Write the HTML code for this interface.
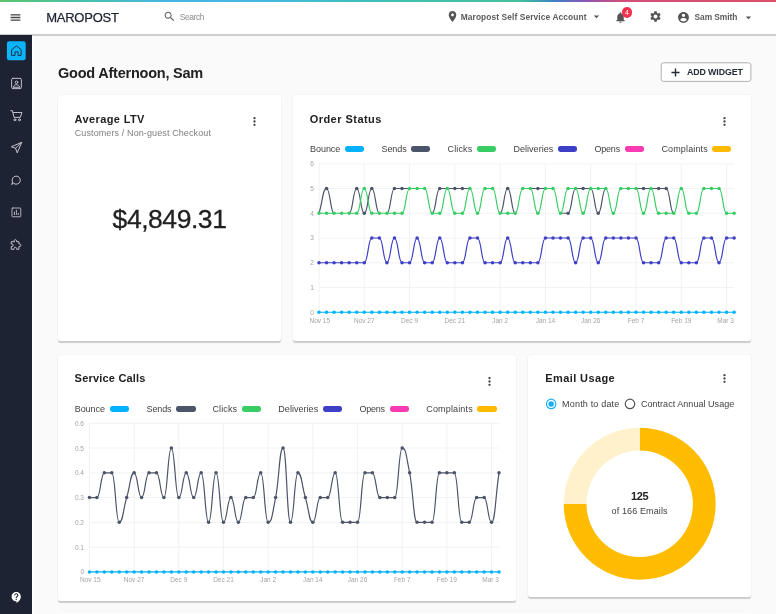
<!DOCTYPE html>
<html lang="en">
<head>
<meta charset="utf-8">
<title>Maropost Dashboard</title>
<style>
*{box-sizing:border-box;margin:0;padding:0}
html,body{width:776px;height:614px;overflow:hidden;background:#fafafa;font-family:"Liberation Sans",sans-serif;color:#212121}
.abs,.t,.lg,.sw,.card,svg.ic{position:absolute}
.t,.lg{white-space:nowrap;line-height:1}
#grad{position:absolute;left:0;top:0;width:776px;height:2.3px;background:linear-gradient(90deg,#5ac46e 0%,#46c0b8 13%,#45b5e5 22%,#45b8e2 34%,#40c0b2 50%,#45bf9c 67%,#3fa5b0 69%,#3f80c5 71.5%,#8a55b5 75.5%,#d0507a 80%,#dc5068 100%)}
#hdr{position:absolute;left:0;top:2px;width:776px;height:32px;background:#fff}
#hband{position:absolute;left:0;top:34px;width:776px;height:2px;background:#cdcdcd;box-shadow:0 0 .7px rgba(0,0,0,.18)}
#sgap{position:absolute;left:32px;top:36px;width:2px;height:578px;background:#fff}
#side{position:absolute;left:0;top:35px;width:32px;height:579px;background:#1e2333}
.card{background:#fff;border-radius:2.5px;box-shadow:0 1.1px 1px rgba(0,0,0,.18),0 0 1.5px rgba(0,0,0,.09)}
.h1{font-weight:700;font-size:14.5px;color:#212121}
.ct{font-weight:700;font-size:11px;color:#212121}
.sub{font-size:9px;color:#808080}
.lg{font-size:9px;color:#424242}
.sw{width:19.3px;height:6.5px;border-radius:2.4px}
.hd{font-weight:700;font-size:8.4px;color:#5c5c5c}
svg.ic{overflow:visible}
.ax text{font-family:"Liberation Sans",sans-serif;font-size:6.5px;fill:#a3a3a3}
#charts{position:absolute;left:0;top:0}
#root{position:absolute;left:0;top:0;width:776px;height:614px;overflow:hidden;will-change:transform}
#logo{letter-spacing:-0.24px;left:46.2px!important;width:auto!important;text-align:left!important}
#srch{letter-spacing:-0.46px;left:179.8px!important;width:auto!important;text-align:left!important}
#acct{letter-spacing:0.10px;left:460.7px!important;width:auto!important;text-align:left!important}
#user{letter-spacing:-0.07px;left:694.6px!important;width:auto!important;text-align:left!important}
#greet{letter-spacing:-0.23px;left:58.0px!important;width:auto!important;text-align:left!important}
#addw{letter-spacing:-0.08px;left:686.9px!important;width:auto!important;text-align:left!important}
#t1{letter-spacing:0.38px;left:74.6px!important;width:auto!important;text-align:left!important}
#s1{letter-spacing:0.11px;left:74.7px!important;width:auto!important;text-align:left!important}
#big{letter-spacing:-0.45px;left:112.6px!important;width:auto!important;text-align:left!important}
#t2{letter-spacing:0.46px;left:309.7px!important;width:auto!important;text-align:left!important}
#t3{letter-spacing:0.20px;left:74.6px!important;width:auto!important;text-align:left!important}
#t4{letter-spacing:0.40px;left:545.3px!important;width:auto!important;text-align:left!important}
#r1{letter-spacing:0.18px;left:562.1px!important;width:auto!important;text-align:left!important}
#r2{letter-spacing:0.04px;left:640.9px!important;width:auto!important;text-align:left!important}
#la0{letter-spacing:-0.06px;left:310.1px!important;width:auto!important;text-align:left!important}
#la1{letter-spacing:-0.12px;left:381.6px!important;width:auto!important;text-align:left!important}
#la2{letter-spacing:0.11px;left:447.6px!important;width:auto!important;text-align:left!important}
#la3{letter-spacing:0.04px;left:513.4px!important;width:auto!important;text-align:left!important}
#la4{letter-spacing:-0.22px;left:594.5px!important;width:auto!important;text-align:left!important}
#la5{letter-spacing:0.15px;left:661.4px!important;width:auto!important;text-align:left!important}
#lb0{letter-spacing:-0.04px;left:74.7px!important;width:auto!important;text-align:left!important}
#lb1{letter-spacing:-0.10px;left:146.5px!important;width:auto!important;text-align:left!important}
#lb2{letter-spacing:0.11px;left:212.5px!important;width:auto!important;text-align:left!important}
#lb3{letter-spacing:0.04px;left:278.3px!important;width:auto!important;text-align:left!important}
#lb4{letter-spacing:-0.22px;left:359.4px!important;width:auto!important;text-align:left!important}
#lb5{letter-spacing:0.15px;left:426.3px!important;width:auto!important;text-align:left!important}
#d1{letter-spacing:-0.40px;left:631.0px!important;width:auto!important;text-align:left!important}
#d2{letter-spacing:0.13px;left:611.5px!important;width:auto!important;text-align:left!important}

</style>
</head>
<body>
<div id="root">
<div id="hdr"></div>
<div id="hband"></div>
<div id="sgap"></div>
<div id="grad"></div>
<div id="side"></div>

<!-- header -->
<svg class="ic" style="left:8.5px;top:10.9px" width="13" height="13" viewBox="0 0 24 24"><path fill="#444" d="M3 18.200h18v-2.400H3v2.400zm0-5h18v-2.400H3v2.400zm0-7.400v2.400h18V5.800H3z"/></svg>
<span class="t" id="logo" style="left:46.2px;top:11.2px;font-size:13px;color:#1e2333;-webkit-text-stroke:.25px #1e2333">MAROPOST</span>
<svg class="ic" style="left:162.6px;top:10.4px" width="13" height="13" viewBox="0 0 24 24"><path fill="#616161" d="M15.5 14h-.79l-.28-.27C15.41 12.59 16 11.11 16 9.5 16 5.910 13.090 3 9.5 3S3 5.910 3 9.5 5.910 16 9.5 16c1.610 0 3.090-.59 4.230-1.570l.27.28v.79l5 4.990L20.490 19l-4.990-5zm-6 0C7.010 14 5 11.990 5 9.5S7.010 5 9.5 5 14 7.010 14 9.5 11.990 14 9.500 14z"/></svg>
<span class="t" id="srch" style="left:180px;top:13.1px;font-size:8.5px;color:#8e8e8e">Search</span>

<svg class="ic" style="left:445.6px;top:10px" width="13" height="13" viewBox="0 0 24 24"><path fill="#555" d="M12 2C8.130 2 5 5.130 5 9c0 5.250 7 13 7 13s7-7.750 7-13c0-3.870-3.130-7-7-7zm0 9.500c-1.380 0-2.500-1.120-2.500-2.500s1.120-2.500 2.500-2.500 2.500 1.120 2.500 2.500-1.120 2.500-2.500 2.500z"/></svg>
<span class="t hd" id="acct" style="left:460.6px;top:12.9px">Maropost Self Service Account</span>
<svg class="ic" style="left:590.4px;top:10.3px" width="13" height="13" viewBox="0 0 24 24"><path fill="#555" d="M7 10l5 5 5-5z"/></svg>
<svg class="ic" style="left:613.8px;top:10.6px" width="13" height="13" viewBox="0 0 24 24"><path fill="#555" d="M12 22c1.100 0 2-.9 2-2h-4c0 1.100.89 2 2 2zm6-6v-5c0-3.070-1.640-5.640-4.500-6.320V4c0-.83-.67-1.500-1.500-1.500s-1.500.67-1.500 1.500v.68C7.630 5.360 6 7.920 6 11v5l-2 2v1h16v-1l-2-2z"/></svg>
<span class="abs" style="left:621.6px;top:7.1px;width:10.9px;height:10.9px;border-radius:50%;background:#f5304e"></span>
<span class="t" style="left:621.6px;top:9.1px;width:10.8px;text-align:center;font-size:7px;color:#fff">4</span>
<svg class="ic" style="left:648.5px;top:10.2px" width="13" height="13" viewBox="0 0 24 24"><path fill="#555" d="M19.140 12.940c.04-.3.06-.61.06-.94 0-.32-.02-.64-.07-.94l2.030-1.580c.18-.14.23-.41.12-.61l-1.920-3.320c-.12-.22-.37-.29-.59-.22l-2.390.96c-.5-.38-1.030-.7-1.620-.94l-.36-2.540c-.04-.24-.24-.41-.48-.41h-3.840c-.24 0-.43.17-.47.41l-.36 2.540c-.59.24-1.130.57-1.620.94l-2.390-.96c-.22-.08-.47 0-.59.22L2.740 8.870c-.12.21-.08.47.12.61l2.030 1.580c-.05.3-.09.63-.09.94s.02.64.07.94l-2.030 1.580c-.18.14-.23.41-.12.61l1.920 3.320c.12.22.37.29.59.22l2.390-.96c.5.38 1.030.7 1.620.94l.36 2.540c.05.24.24.41.48.41h3.840c.24 0 .44-.17.47-.41l.36-2.540c.59-.24 1.130-.56 1.620-.94l2.390.96c.22.08.47 0 .59-.22l1.920-3.320c.12-.22.07-.47-.12-.61l-2.010-1.580zM12 15.600c-1.980 0-3.600-1.620-3.600-3.600s1.620-3.600 3.600-3.600 3.600 1.620 3.600 3.600-1.620 3.600-3.600 3.600z"/></svg>
<svg class="ic" style="left:677.4px;top:10.8px" width="13" height="13" viewBox="0 0 24 24"><path fill="#555" d="M12 2C6.480 2 2 6.480 2 12s4.480 10 10 10 10-4.480 10-10S17.520 2 12 2zm0 3c1.660 0 3 1.340 3 3s-1.340 3-3 3-3-1.340-3-3 1.340-3 3-3zm0 14.200c-2.500 0-4.710-1.280-6-3.220.03-1.990 4-3.080 6-3.080 1.990 0 5.970 1.090 6 3.080-1.290 1.940-3.500 3.220-6 3.220z"/></svg>
<span class="t hd" id="user" style="left:694.7px;top:12.9px">Sam Smith</span>
<svg class="ic" style="left:742.1px;top:10.8px" width="13" height="13" viewBox="0 0 24 24"><path fill="#555" d="M7 10l5 5 5-5z"/></svg>

<!-- sidebar icons -->
<svg class="ic" style="left:0;top:0" width="34" height="70" viewBox="0 0 34 70"><rect x="6.900" y="41.200" width="18.800" height="19" rx="2.300" fill="#0cb4fc"/></svg>
<svg class="ic" style="left:9.7px;top:44.2px" width="13" height="13" viewBox="0 0 24 24" fill="none" stroke="#1e2333" stroke-width="1.700" stroke-linejoin="round" stroke-linecap="round"><path d="M3.500 10.300L12 3.300l8.500 7V21h-5.700v-6.500H9.200V21H3.500z"/></svg>
<svg class="ic" style="left:9.800px;top:76.600px" width="13" height="13" viewBox="0 0 24 24" fill="none" stroke="#c9ccd3" stroke-width="1.750" stroke-linejoin="round" stroke-linecap="round"><rect x="3" y="2.500" width="18" height="19" rx="2.500"/><circle cx="12" cy="9.800" r="2.400"/><path d="M6 18.300c.9-2.800 3.200-3.900 6-3.900s5.100 1.100 6 3.900z"/></svg>
<svg class="ic" style="left:9.500px;top:108.700px" width="13" height="13" viewBox="0 0 24 24" fill="none" stroke="#c9ccd3" stroke-width="1.750" stroke-linejoin="round" stroke-linecap="round"><path d="M1.500 3h3l3 12.500h11.500l3-9H6"/><circle cx="9" cy="20" r="1.800"/><circle cx="17.500" cy="20" r="1.800"/></svg>
<svg class="ic" style="left:10px;top:140.800px" width="13" height="13" viewBox="0 0 24 24" fill="none" stroke="#c9ccd3" stroke-width="1.750" stroke-linejoin="round" stroke-linecap="round"><g transform="translate(11.70 12.00) scale(0.93) translate(-12 -12)" stroke-width="1.88"><path d="M22 2L2 10.500l8.500 3L13.500 22z M10.500 13.500L22 2"/></g></svg>
<svg class="ic" style="left:9.600px;top:173.800px" width="13" height="13" viewBox="0 0 24 24" fill="none" stroke="#c9ccd3" stroke-width="1.750" stroke-linejoin="round" stroke-linecap="round"><g transform="translate(11.40 11.00) scale(0.88) translate(-12 -12)" stroke-width="1.99"><path d="M6.200 18.800A8.600 8.600 0 1 0 4.300 16.200L3 21z"/></g></svg>
<svg class="ic" style="left:9.600px;top:205.600px" width="13" height="13" viewBox="0 0 24 24" fill="none" stroke="#c9ccd3" stroke-width="1.750" stroke-linejoin="round" stroke-linecap="round"><g transform="translate(11.80 11.80) scale(0.90) translate(-12 -12)" stroke-width="1.70"><rect x="3" y="3" width="18" height="18" rx="1.500"/><path d="M8 16.500v-5M12 16.500v-9M16 16.500v-2.500"/></g></svg>
<svg class="ic" style="left:9.500px;top:238px" width="13" height="13" viewBox="0 0 24 24" fill="none" stroke="#c9ccd3" stroke-width="1.750" stroke-linejoin="round" stroke-linecap="round"><g transform="translate(10.30 12.40) scale(0.94) translate(-12 -12)" stroke-width="1.85"><path d="M9 4.500c0-1.400 1.100-2.500 2.500-2.500S14 3.100 14 4.500V6h4.500v4.500H20c1.400 0 2.500 1.100 2.500 2.500s-1.100 2.500-2.500 2.500h-1.500V21H14v-1.500c0-1.400-1.100-2.500-2.500-2.500S9 18.100 9 19.500V21H3.500v-5.500H5c1.400 0 2.500-1.100 2.500-2.500S6.400 10.500 5 10.500H3.500V6H9z"/></g></svg>
<svg class="ic" style="left:9.500px;top:591.300px" width="13" height="13" viewBox="0 0 24 24"><path fill="#fff" d="M11.500 2C6.810 2 3 5.810 3 10.500S6.810 19 11.500 19h.5v3c4.860-2.340 8-7 8-11.500C20 5.810 16.190 2 11.500 2zm1 14.500h-2v-2h2v2zm0-3.500h-2c0-3.250 3-3 3-5 0-1.100-.9-2-2-2s-2 .9-2 2h-2c0-2.210 1.790-4 4-4s4 1.790 4 4c0 2.500-3 2.750-3 5z"/></svg>

<!-- title row -->
<span class="t h1" id="greet" style="left:57.8px;top:65.5px">Good Afternoon, Sam</span>
<svg class="ic" style="left:0;top:0" width="776" height="100" viewBox="0 0 776 100"><rect x="661.200" y="62.800" width="89.700" height="18.600" rx="2.300" fill="#fff" stroke="#b0b0b0" stroke-width="1"/></svg>
<svg class="ic" style="left:669.2px;top:65.700px" width="13" height="13" viewBox="0 0 24 24"><path fill="#262b3a" d="M19.500 13.300h-6.200v6.200h-2.600v-6.200H4.500v-2.600h6.200V4.500h2.600v6.200h6.200v2.600z"/></svg>
<span class="t" id="addw" style="left:687px;top:67.900px;font-size:8.800px;font-weight:700;color:#262b3a">ADD WIDGET</span>

<!-- cards -->
<div class="card" style="left:58px;top:95px;width:223.200px;height:246.300px"></div>
<div class="card" style="left:292.700px;top:95px;width:458.400px;height:246.300px"></div>
<div class="card" style="left:58px;top:354.600px;width:458px;height:246.900px"></div>
<div class="card" style="left:527.800px;top:354.600px;width:223.200px;height:242.200px"></div>

<div class="abs" style="left:58px;top:613px;width:693px;height:1px;background:#fdfdfd"></div>

<!-- card 1 -->
<span class="t ct" id="t1" style="left:74.800px;top:113.600px">Average LTV</span>
<span class="t sub" id="s1" style="left:74.800px;top:129.400px">Customers / Non-guest Checkout</span>
<svg class="ic" style="left:247.900px;top:114.900px" width="13" height="13" viewBox="0 0 24 24"><g fill="#454545"><circle cx="12" cy="5.800" r="2.150"/><circle cx="12" cy="12" r="2.150"/><circle cx="12" cy="18.200" r="2.150"/></g></svg>
<span class="t" id="big" style="left:58px;top:205.800px;width:223px;text-align:center;font-size:26.500px;color:#212121;-webkit-text-stroke:.3px #212121">$4,849.31</span>

<!-- card 2 -->
<span class="t ct" id="t2" style="left:310px;top:113.600px">Order Status</span>
<svg class="ic" style="left:717.500px;top:114.900px" width="13" height="13" viewBox="0 0 24 24"><g fill="#454545"><circle cx="12" cy="5.800" r="2.150"/><circle cx="12" cy="12" r="2.150"/><circle cx="12" cy="18.200" r="2.150"/></g></svg>
<span class="lg" id="la0" style="left:310.0px;top:145.2px">Bounce</span>
<i class="sw" style="left:344.8px;top:145.9px;background:#03b2fd"></i>
<span class="lg" id="la1" style="left:381.5px;top:145.2px">Sends</span>
<i class="sw" style="left:411.1px;top:145.9px;background:#4b5468"></i>
<span class="lg" id="la2" style="left:447.6px;top:145.2px">Clicks</span>
<i class="sw" style="left:476.9px;top:145.9px;background:#37cd64"></i>
<span class="lg" id="la3" style="left:513.4px;top:145.2px">Deliveries</span>
<i class="sw" style="left:558.0px;top:145.9px;background:#3d3fc6"></i>
<span class="lg" id="la4" style="left:594.5px;top:145.2px">Opens</span>
<i class="sw" style="left:624.9px;top:145.9px;background:#fb3bb4"></i>
<span class="lg" id="la5" style="left:661.4px;top:145.2px">Complaints</span>
<i class="sw" style="left:712.2px;top:145.9px;background:#ffb900"></i>

<!-- card 3 -->
<span class="t ct" id="t3" style="left:74.800px;top:373px">Service Calls</span>
<svg class="ic" style="left:482.500px;top:374.700px" width="13" height="13" viewBox="0 0 24 24"><g fill="#454545"><circle cx="12" cy="5.800" r="2.150"/><circle cx="12" cy="12" r="2.150"/><circle cx="12" cy="18.200" r="2.150"/></g></svg>
<span class="lg" id="lb0" style="left:74.9px;top:404.9px">Bounce</span>
<i class="sw" style="left:110.0px;top:405.6px;background:#03b2fd"></i>
<span class="lg" id="lb1" style="left:146.4px;top:404.9px">Sends</span>
<i class="sw" style="left:176.3px;top:405.6px;background:#4b5468"></i>
<span class="lg" id="lb2" style="left:212.5px;top:404.9px">Clicks</span>
<i class="sw" style="left:242.1px;top:405.6px;background:#37cd64"></i>
<span class="lg" id="lb3" style="left:278.3px;top:404.9px">Deliveries</span>
<i class="sw" style="left:323.2px;top:405.6px;background:#3d3fc6"></i>
<span class="lg" id="lb4" style="left:359.4px;top:404.9px">Opens</span>
<i class="sw" style="left:390.1px;top:405.6px;background:#fb3bb4"></i>
<span class="lg" id="lb5" style="left:426.3px;top:404.9px">Complaints</span>
<i class="sw" style="left:477.4px;top:405.6px;background:#ffb900"></i>

<!-- card 4 -->
<span class="t ct" id="t4" style="left:545px;top:373px">Email Usage</span>
<svg class="ic" style="left:717.500px;top:371.700px" width="13" height="13" viewBox="0 0 24 24"><g fill="#454545"><circle cx="12" cy="5.800" r="2.150"/><circle cx="12" cy="12" r="2.150"/><circle cx="12" cy="18.200" r="2.150"/></g></svg>
<span class="t lg" id="r1" style="left:562.200px;top:399.900px">Month to date</span>
<span class="t lg" id="r2" style="left:640.700px;top:399.900px">Contract Annual Usage</span>
<span class="t" id="d1" style="left:589.700px;top:490.500px;width:100px;text-align:center;font-size:11px;font-weight:700;color:#212121">125</span>
<span class="t" id="d2" style="left:589.700px;top:506.600px;width:100px;text-align:center;font-size:9px;color:#424242">of 166 Emails</span>

<svg id="charts" width="776" height="614" viewBox="0 0 776 614">
<g stroke="#f0f0f0" stroke-width="0.9" fill="none"><line x1="319.00" x2="734.10" y1="312.25" y2="312.25"/><line x1="319.00" x2="734.10" y1="287.50" y2="287.50"/><line x1="319.00" x2="734.10" y1="262.75" y2="262.75"/><line x1="319.00" x2="734.10" y1="238.00" y2="238.00"/><line x1="319.00" x2="734.10" y1="213.25" y2="213.25"/><line x1="319.00" x2="734.10" y1="188.50" y2="188.50"/><line x1="319.00" x2="734.10" y1="163.75" y2="163.75"/><line x1="319.00" x2="319.00" y1="163.75" y2="312.25"/><line x1="364.28" x2="364.28" y1="163.75" y2="312.25"/><line x1="409.57" x2="409.57" y1="163.75" y2="312.25"/><line x1="454.85" x2="454.85" y1="163.75" y2="312.25"/><line x1="500.13" x2="500.13" y1="163.75" y2="312.25"/><line x1="545.42" x2="545.42" y1="163.75" y2="312.25"/><line x1="590.70" x2="590.70" y1="163.75" y2="312.25"/><line x1="635.99" x2="635.99" y1="163.75" y2="312.25"/><line x1="681.27" x2="681.27" y1="163.75" y2="312.25"/><line x1="726.55" x2="726.55" y1="163.75" y2="312.25"/></g>
<g class="ax"><text x="313.90" y="314.70" text-anchor="end">0</text><text x="313.90" y="289.95" text-anchor="end">1</text><text x="313.90" y="265.20" text-anchor="end">2</text><text x="313.90" y="240.45" text-anchor="end">3</text><text x="313.90" y="215.70" text-anchor="end">4</text><text x="313.90" y="190.95" text-anchor="end">5</text><text x="313.90" y="166.20" text-anchor="end">6</text><text x="319.80" y="322.80" text-anchor="middle">Nov 15</text><text x="364.28" y="322.80" text-anchor="middle">Nov 27</text><text x="409.57" y="322.80" text-anchor="middle">Dec 9</text><text x="454.85" y="322.80" text-anchor="middle">Dec 21</text><text x="500.13" y="322.80" text-anchor="middle">Jan 2</text><text x="545.42" y="322.80" text-anchor="middle">Jan 14</text><text x="590.70" y="322.80" text-anchor="middle">Jan 26</text><text x="635.99" y="322.80" text-anchor="middle">Feb 7</text><text x="681.27" y="322.80" text-anchor="middle">Feb 19</text><text x="725.55" y="322.80" text-anchor="middle">Mar 3</text></g>
<path d="M319.00 262.75C322.77 262.75 322.77 262.75 326.55 262.75C330.32 262.75 330.32 262.75 334.09 262.75C337.87 262.75 337.87 262.75 341.64 262.75C345.42 262.75 345.42 262.75 349.19 262.75C352.96 262.75 352.96 262.75 356.74 262.75C360.51 262.75 360.51 262.75 364.28 262.75C368.06 262.75 368.06 238.00 371.83 238.00C375.60 238.00 375.60 238.00 379.38 238.00C383.15 238.00 383.15 262.75 386.93 262.75C390.70 262.75 390.70 238.00 394.47 238.00C398.25 238.00 398.25 262.75 402.02 262.75C405.79 262.75 405.79 262.75 409.57 262.75C413.34 262.75 413.34 238.00 417.11 238.00C420.89 238.00 420.89 262.75 424.66 262.75C428.44 262.75 428.44 262.75 432.21 262.75C435.98 262.75 435.98 238.00 439.76 238.00C443.53 238.00 443.53 262.75 447.30 262.75C451.08 262.75 451.08 262.75 454.85 262.75C458.62 262.75 458.62 262.75 462.40 262.75C466.17 262.75 466.17 238.00 469.95 238.00C473.72 238.00 473.72 238.00 477.49 238.00C481.27 238.00 481.27 262.75 485.04 262.75C488.81 262.75 488.81 262.75 492.59 262.75C496.36 262.75 496.36 262.75 500.13 262.75C503.91 262.75 503.91 238.00 507.68 238.00C511.46 238.00 511.46 262.75 515.23 262.75C519.00 262.75 519.00 262.75 522.78 262.75C526.55 262.75 526.55 262.75 530.32 262.75C534.10 262.75 534.10 262.75 537.87 262.75C541.64 262.75 541.64 238.00 545.42 238.00C549.19 238.00 549.19 238.00 552.97 238.00C556.74 238.00 556.74 238.00 560.51 238.00C564.29 238.00 564.29 238.00 568.06 238.00C571.83 238.00 571.83 262.75 575.61 262.75C579.38 262.75 579.38 238.00 583.15 238.00C586.93 238.00 586.93 238.00 590.70 238.00C594.48 238.00 594.48 262.75 598.25 262.75C602.02 262.75 602.02 238.00 605.80 238.00C609.57 238.00 609.57 238.00 613.34 238.00C617.12 238.00 617.12 238.00 620.89 238.00C624.66 238.00 624.66 238.00 628.44 238.00C632.21 238.00 632.21 238.00 635.99 238.00C639.76 238.00 639.76 262.75 643.53 262.75C647.31 262.75 647.31 262.75 651.08 262.75C654.85 262.75 654.85 262.75 658.63 262.75C662.40 262.75 662.40 238.00 666.17 238.00C669.95 238.00 669.95 238.00 673.72 238.00C677.50 238.00 677.50 262.75 681.27 262.75C685.04 262.75 685.04 262.75 688.82 262.75C692.59 262.75 692.59 262.75 696.36 262.75C700.14 262.75 700.14 238.00 703.91 238.00C707.68 238.00 707.68 238.00 711.46 238.00C715.23 238.00 715.23 262.75 719.01 262.75C722.78 262.75 722.78 238.00 726.55 238.00C730.33 238.00 730.33 238.00 734.10 238.00" fill="none" stroke="#3d3fc6" stroke-width="1.2" stroke-linejoin="round"/>
<g fill="#3d3fc6"><circle cx="319.00" cy="262.75" r="1.75"/><circle cx="326.55" cy="262.75" r="1.75"/><circle cx="334.09" cy="262.75" r="1.75"/><circle cx="341.64" cy="262.75" r="1.75"/><circle cx="349.19" cy="262.75" r="1.75"/><circle cx="356.74" cy="262.75" r="1.75"/><circle cx="364.28" cy="262.75" r="1.75"/><circle cx="371.83" cy="238.00" r="1.75"/><circle cx="379.38" cy="238.00" r="1.75"/><circle cx="386.93" cy="262.75" r="1.75"/><circle cx="394.47" cy="238.00" r="1.75"/><circle cx="402.02" cy="262.75" r="1.75"/><circle cx="409.57" cy="262.75" r="1.75"/><circle cx="417.11" cy="238.00" r="1.75"/><circle cx="424.66" cy="262.75" r="1.75"/><circle cx="432.21" cy="262.75" r="1.75"/><circle cx="439.76" cy="238.00" r="1.75"/><circle cx="447.30" cy="262.75" r="1.75"/><circle cx="454.85" cy="262.75" r="1.75"/><circle cx="462.40" cy="262.75" r="1.75"/><circle cx="469.95" cy="238.00" r="1.75"/><circle cx="477.49" cy="238.00" r="1.75"/><circle cx="485.04" cy="262.75" r="1.75"/><circle cx="492.59" cy="262.75" r="1.75"/><circle cx="500.13" cy="262.75" r="1.75"/><circle cx="507.68" cy="238.00" r="1.75"/><circle cx="515.23" cy="262.75" r="1.75"/><circle cx="522.78" cy="262.75" r="1.75"/><circle cx="530.32" cy="262.75" r="1.75"/><circle cx="537.87" cy="262.75" r="1.75"/><circle cx="545.42" cy="238.00" r="1.75"/><circle cx="552.97" cy="238.00" r="1.75"/><circle cx="560.51" cy="238.00" r="1.75"/><circle cx="568.06" cy="238.00" r="1.75"/><circle cx="575.61" cy="262.75" r="1.75"/><circle cx="583.15" cy="238.00" r="1.75"/><circle cx="590.70" cy="238.00" r="1.75"/><circle cx="598.25" cy="262.75" r="1.75"/><circle cx="605.80" cy="238.00" r="1.75"/><circle cx="613.34" cy="238.00" r="1.75"/><circle cx="620.89" cy="238.00" r="1.75"/><circle cx="628.44" cy="238.00" r="1.75"/><circle cx="635.99" cy="238.00" r="1.75"/><circle cx="643.53" cy="262.75" r="1.75"/><circle cx="651.08" cy="262.75" r="1.75"/><circle cx="658.63" cy="262.75" r="1.75"/><circle cx="666.17" cy="238.00" r="1.75"/><circle cx="673.72" cy="238.00" r="1.75"/><circle cx="681.27" cy="262.75" r="1.75"/><circle cx="688.82" cy="262.75" r="1.75"/><circle cx="696.36" cy="262.75" r="1.75"/><circle cx="703.91" cy="238.00" r="1.75"/><circle cx="711.46" cy="238.00" r="1.75"/><circle cx="719.01" cy="262.75" r="1.75"/><circle cx="726.55" cy="238.00" r="1.75"/><circle cx="734.10" cy="238.00" r="1.75"/></g>
<path d="M319.00 213.25C322.77 200.88 322.77 188.50 326.55 188.50C330.32 188.50 330.32 213.25 334.09 213.25M349.19 213.25C352.96 213.25 352.96 188.50 356.74 188.50C360.51 188.50 360.51 213.25 364.28 213.25C368.06 213.25 368.06 188.50 371.83 188.50C375.60 188.50 375.60 213.25 379.38 213.25M386.93 213.25C390.70 213.25 390.70 188.50 394.47 188.50C398.25 188.50 398.25 188.50 402.02 188.50C405.79 188.50 405.79 188.50 409.57 188.50M432.21 213.25C435.98 213.25 435.98 188.50 439.76 188.50C443.53 188.50 443.53 188.50 447.30 188.50C451.08 188.50 451.08 188.50 454.85 188.50C458.62 188.50 458.62 188.50 462.40 188.50C466.17 188.50 466.17 188.50 469.95 188.50M500.13 213.25C503.91 213.25 503.91 188.50 507.68 188.50C511.46 188.50 511.46 213.25 515.23 213.25M530.32 188.50C534.10 188.50 534.10 188.50 537.87 188.50C541.64 188.50 541.64 188.50 545.42 188.50M560.51 213.25C564.29 213.25 564.29 213.25 568.06 213.25C571.83 213.25 571.83 188.50 575.61 188.50C579.38 188.50 579.38 188.50 583.15 188.50C586.93 188.50 586.93 188.50 590.70 188.50C594.48 188.50 594.48 213.25 598.25 213.25C602.02 213.25 602.02 188.50 605.80 188.50M635.99 188.50C639.76 188.50 639.76 188.50 643.53 188.50C647.31 188.50 647.31 188.50 651.08 188.50C654.85 188.50 654.85 188.50 658.63 188.50C662.40 188.50 662.40 188.50 666.17 188.50C669.95 188.50 669.95 213.25 673.72 213.25" fill="none" stroke="#4b5468" stroke-width="1.2" stroke-linejoin="round"/>
<g fill="#4b5468"><circle cx="326.55" cy="188.50" r="1.75"/><circle cx="356.74" cy="188.50" r="1.75"/><circle cx="364.28" cy="213.25" r="1.75"/><circle cx="371.83" cy="188.50" r="1.75"/><circle cx="394.47" cy="188.50" r="1.75"/><circle cx="402.02" cy="188.50" r="1.75"/><circle cx="439.76" cy="188.50" r="1.75"/><circle cx="454.85" cy="188.50" r="1.75"/><circle cx="462.40" cy="188.50" r="1.75"/><circle cx="507.68" cy="188.50" r="1.75"/><circle cx="537.87" cy="188.50" r="1.75"/><circle cx="568.06" cy="213.25" r="1.75"/><circle cx="583.15" cy="188.50" r="1.75"/><circle cx="598.25" cy="213.25" r="1.75"/><circle cx="643.53" cy="188.50" r="1.75"/><circle cx="658.63" cy="188.50" r="1.75"/><circle cx="666.17" cy="188.50" r="1.75"/></g>
<path d="M319.00 213.25C322.77 213.25 322.77 213.25 326.55 213.25C330.32 213.25 330.32 213.25 334.09 213.25C337.87 213.25 337.87 213.25 341.64 213.25C345.42 213.25 345.42 213.25 349.19 213.25C352.96 213.25 352.96 213.25 356.74 213.25C360.51 213.25 360.51 188.50 364.28 188.50C368.06 188.50 368.06 213.25 371.83 213.25C375.60 213.25 375.60 213.25 379.38 213.25C383.15 213.25 383.15 213.25 386.93 213.25C390.70 213.25 390.70 213.25 394.47 213.25C398.25 213.25 398.25 213.25 402.02 213.25C405.79 213.25 405.79 188.50 409.57 188.50C413.34 188.50 413.34 188.50 417.11 188.50C420.89 188.50 420.89 188.50 424.66 188.50C428.44 188.50 428.44 213.25 432.21 213.25C435.98 213.25 435.98 213.25 439.76 213.25C443.53 213.25 443.53 188.50 447.30 188.50C451.08 188.50 451.08 213.25 454.85 213.25C458.62 213.25 458.62 213.25 462.40 213.25C466.17 213.25 466.17 188.50 469.95 188.50C473.72 188.50 473.72 213.25 477.49 213.25C481.27 213.25 481.27 188.50 485.04 188.50C488.81 188.50 488.81 188.50 492.59 188.50C496.36 188.50 496.36 213.25 500.13 213.25C503.91 213.25 503.91 213.25 507.68 213.25C511.46 213.25 511.46 213.25 515.23 213.25C519.00 213.25 519.00 188.50 522.78 188.50C526.55 188.50 526.55 188.50 530.32 188.50C534.10 188.50 534.10 213.25 537.87 213.25C541.64 213.25 541.64 188.50 545.42 188.50C549.19 188.50 549.19 188.50 552.97 188.50C556.74 188.50 556.74 213.25 560.51 213.25C564.29 213.25 564.29 188.50 568.06 188.50C571.83 188.50 571.83 188.50 575.61 188.50C579.38 188.50 579.38 213.25 583.15 213.25C586.93 213.25 586.93 188.50 590.70 188.50C594.48 188.50 594.48 188.50 598.25 188.50C602.02 188.50 602.02 188.50 605.80 188.50C609.57 188.50 609.57 213.25 613.34 213.25C617.12 213.25 617.12 188.50 620.89 188.50C624.66 188.50 624.66 188.50 628.44 188.50C632.21 188.50 632.21 188.50 635.99 188.50C639.76 188.50 639.76 213.25 643.53 213.25C647.31 213.25 647.31 188.50 651.08 188.50C654.85 188.50 654.85 213.25 658.63 213.25C662.40 213.25 662.40 213.25 666.17 213.25C669.95 213.25 669.95 213.25 673.72 213.25C677.50 213.25 677.50 188.50 681.27 188.50C685.04 188.50 685.04 213.25 688.82 213.25C692.59 213.25 692.59 213.25 696.36 213.25C700.14 213.25 700.14 188.50 703.91 188.50C707.68 188.50 707.68 188.50 711.46 188.50C715.23 188.50 715.23 188.50 719.01 188.50C722.78 188.50 722.78 213.25 726.55 213.25C730.33 213.25 730.33 213.25 734.10 213.25" fill="none" stroke="#37cd64" stroke-width="1.2" stroke-linejoin="round"/>
<g fill="#37cd64"><circle cx="319.00" cy="213.25" r="1.75"/><circle cx="326.55" cy="213.25" r="1.75"/><circle cx="334.09" cy="213.25" r="1.75"/><circle cx="341.64" cy="213.25" r="1.75"/><circle cx="349.19" cy="213.25" r="1.75"/><circle cx="356.74" cy="213.25" r="1.75"/><circle cx="364.28" cy="188.50" r="1.75"/><circle cx="371.83" cy="213.25" r="1.75"/><circle cx="379.38" cy="213.25" r="1.75"/><circle cx="386.93" cy="213.25" r="1.75"/><circle cx="394.47" cy="213.25" r="1.75"/><circle cx="402.02" cy="213.25" r="1.75"/><circle cx="409.57" cy="188.50" r="1.75"/><circle cx="417.11" cy="188.50" r="1.75"/><circle cx="424.66" cy="188.50" r="1.75"/><circle cx="432.21" cy="213.25" r="1.75"/><circle cx="439.76" cy="213.25" r="1.75"/><circle cx="447.30" cy="188.50" r="1.75"/><circle cx="454.85" cy="213.25" r="1.75"/><circle cx="462.40" cy="213.25" r="1.75"/><circle cx="469.95" cy="188.50" r="1.75"/><circle cx="477.49" cy="213.25" r="1.75"/><circle cx="485.04" cy="188.50" r="1.75"/><circle cx="492.59" cy="188.50" r="1.75"/><circle cx="500.13" cy="213.25" r="1.75"/><circle cx="507.68" cy="213.25" r="1.75"/><circle cx="515.23" cy="213.25" r="1.75"/><circle cx="522.78" cy="188.50" r="1.75"/><circle cx="530.32" cy="188.50" r="1.75"/><circle cx="537.87" cy="213.25" r="1.75"/><circle cx="545.42" cy="188.50" r="1.75"/><circle cx="552.97" cy="188.50" r="1.75"/><circle cx="560.51" cy="213.25" r="1.75"/><circle cx="568.06" cy="188.50" r="1.75"/><circle cx="575.61" cy="188.50" r="1.75"/><circle cx="583.15" cy="213.25" r="1.75"/><circle cx="590.70" cy="188.50" r="1.75"/><circle cx="598.25" cy="188.50" r="1.75"/><circle cx="605.80" cy="188.50" r="1.75"/><circle cx="613.34" cy="213.25" r="1.75"/><circle cx="620.89" cy="188.50" r="1.75"/><circle cx="628.44" cy="188.50" r="1.75"/><circle cx="635.99" cy="188.50" r="1.75"/><circle cx="643.53" cy="213.25" r="1.75"/><circle cx="651.08" cy="188.50" r="1.75"/><circle cx="658.63" cy="213.25" r="1.75"/><circle cx="666.17" cy="213.25" r="1.75"/><circle cx="673.72" cy="213.25" r="1.75"/><circle cx="681.27" cy="188.50" r="1.75"/><circle cx="688.82" cy="213.25" r="1.75"/><circle cx="696.36" cy="213.25" r="1.75"/><circle cx="703.91" cy="188.50" r="1.75"/><circle cx="711.46" cy="188.50" r="1.75"/><circle cx="719.01" cy="188.50" r="1.75"/><circle cx="726.55" cy="213.25" r="1.75"/><circle cx="734.10" cy="213.25" r="1.75"/></g>
<path d="M319.00 312.25H734.10" fill="none" stroke="#03b2fd" stroke-width="1.2" stroke-linejoin="round"/>
<g fill="#03b2fd"><circle cx="319.00" cy="312.25" r="1.75"/><circle cx="326.55" cy="312.25" r="1.75"/><circle cx="334.09" cy="312.25" r="1.75"/><circle cx="341.64" cy="312.25" r="1.75"/><circle cx="349.19" cy="312.25" r="1.75"/><circle cx="356.74" cy="312.25" r="1.75"/><circle cx="364.28" cy="312.25" r="1.75"/><circle cx="371.83" cy="312.25" r="1.75"/><circle cx="379.38" cy="312.25" r="1.75"/><circle cx="386.93" cy="312.25" r="1.75"/><circle cx="394.47" cy="312.25" r="1.75"/><circle cx="402.02" cy="312.25" r="1.75"/><circle cx="409.57" cy="312.25" r="1.75"/><circle cx="417.11" cy="312.25" r="1.75"/><circle cx="424.66" cy="312.25" r="1.75"/><circle cx="432.21" cy="312.25" r="1.75"/><circle cx="439.76" cy="312.25" r="1.75"/><circle cx="447.30" cy="312.25" r="1.75"/><circle cx="454.85" cy="312.25" r="1.75"/><circle cx="462.40" cy="312.25" r="1.75"/><circle cx="469.95" cy="312.25" r="1.75"/><circle cx="477.49" cy="312.25" r="1.75"/><circle cx="485.04" cy="312.25" r="1.75"/><circle cx="492.59" cy="312.25" r="1.75"/><circle cx="500.13" cy="312.25" r="1.75"/><circle cx="507.68" cy="312.25" r="1.75"/><circle cx="515.23" cy="312.25" r="1.75"/><circle cx="522.78" cy="312.25" r="1.75"/><circle cx="530.32" cy="312.25" r="1.75"/><circle cx="537.87" cy="312.25" r="1.75"/><circle cx="545.42" cy="312.25" r="1.75"/><circle cx="552.97" cy="312.25" r="1.75"/><circle cx="560.51" cy="312.25" r="1.75"/><circle cx="568.06" cy="312.25" r="1.75"/><circle cx="575.61" cy="312.25" r="1.75"/><circle cx="583.15" cy="312.25" r="1.75"/><circle cx="590.70" cy="312.25" r="1.75"/><circle cx="598.25" cy="312.25" r="1.75"/><circle cx="605.80" cy="312.25" r="1.75"/><circle cx="613.34" cy="312.25" r="1.75"/><circle cx="620.89" cy="312.25" r="1.75"/><circle cx="628.44" cy="312.25" r="1.75"/><circle cx="635.99" cy="312.25" r="1.75"/><circle cx="643.53" cy="312.25" r="1.75"/><circle cx="651.08" cy="312.25" r="1.75"/><circle cx="658.63" cy="312.25" r="1.75"/><circle cx="666.17" cy="312.25" r="1.75"/><circle cx="673.72" cy="312.25" r="1.75"/><circle cx="681.27" cy="312.25" r="1.75"/><circle cx="688.82" cy="312.25" r="1.75"/><circle cx="696.36" cy="312.25" r="1.75"/><circle cx="703.91" cy="312.25" r="1.75"/><circle cx="711.46" cy="312.25" r="1.75"/><circle cx="719.01" cy="312.25" r="1.75"/><circle cx="726.55" cy="312.25" r="1.75"/><circle cx="734.10" cy="312.25" r="1.75"/></g>
<g stroke="#f0f0f0" stroke-width="0.9" fill="none"><line x1="89.45" x2="499.00" y1="571.90" y2="571.90"/><line x1="89.45" x2="499.00" y1="547.13" y2="547.13"/><line x1="89.45" x2="499.00" y1="522.37" y2="522.37"/><line x1="89.45" x2="499.00" y1="497.60" y2="497.60"/><line x1="89.45" x2="499.00" y1="472.83" y2="472.83"/><line x1="89.45" x2="499.00" y1="448.07" y2="448.07"/><line x1="89.45" x2="499.00" y1="423.30" y2="423.30"/><line x1="89.45" x2="89.45" y1="423.30" y2="571.90"/><line x1="134.13" x2="134.13" y1="423.30" y2="571.90"/><line x1="178.81" x2="178.81" y1="423.30" y2="571.90"/><line x1="223.48" x2="223.48" y1="423.30" y2="571.90"/><line x1="268.16" x2="268.16" y1="423.30" y2="571.90"/><line x1="312.84" x2="312.84" y1="423.30" y2="571.90"/><line x1="357.52" x2="357.52" y1="423.30" y2="571.90"/><line x1="402.20" x2="402.20" y1="423.30" y2="571.90"/><line x1="446.88" x2="446.88" y1="423.30" y2="571.90"/><line x1="491.55" x2="491.55" y1="423.30" y2="571.90"/></g>
<g class="ax"><text x="84.00" y="574.35" text-anchor="end">0</text><text x="84.00" y="549.58" text-anchor="end">0.1</text><text x="84.00" y="524.82" text-anchor="end">0.2</text><text x="84.00" y="500.05" text-anchor="end">0.3</text><text x="84.00" y="475.28" text-anchor="end">0.4</text><text x="84.00" y="450.52" text-anchor="end">0.5</text><text x="84.00" y="425.75" text-anchor="end">0.6</text><text x="90.25" y="582.20" text-anchor="middle">Nov 15</text><text x="134.13" y="582.20" text-anchor="middle">Nov 27</text><text x="178.81" y="582.20" text-anchor="middle">Dec 9</text><text x="223.48" y="582.20" text-anchor="middle">Dec 21</text><text x="268.16" y="582.20" text-anchor="middle">Jan 2</text><text x="312.84" y="582.20" text-anchor="middle">Jan 14</text><text x="357.52" y="582.20" text-anchor="middle">Jan 26</text><text x="402.20" y="582.20" text-anchor="middle">Feb 7</text><text x="446.88" y="582.20" text-anchor="middle">Feb 19</text><text x="490.55" y="582.20" text-anchor="middle">Mar 3</text></g>
<path d="M89.45 497.60C93.17 497.60 93.17 497.60 96.90 497.60C100.62 497.60 100.62 472.83 104.34 472.83C108.07 472.83 108.07 472.83 111.79 472.83C115.51 472.83 115.51 522.37 119.24 522.37C122.96 522.37 122.96 509.98 126.68 497.60C130.41 485.22 130.41 472.83 134.13 472.83C137.85 472.83 137.85 497.60 141.57 497.60C145.30 497.60 145.30 472.83 149.02 472.83C152.74 472.83 152.74 472.83 156.47 472.83C160.19 472.83 160.19 497.60 163.91 497.60C167.64 497.60 167.64 448.07 171.36 448.07C175.08 448.07 175.08 497.60 178.81 497.60C182.53 497.60 182.53 472.83 186.25 472.83C189.98 472.83 189.98 497.60 193.70 497.60C197.42 497.60 197.42 472.83 201.15 472.83C204.87 472.83 204.87 522.37 208.59 522.37C212.31 522.37 212.31 472.83 216.04 472.83C219.76 472.83 219.76 522.37 223.48 522.37C227.21 522.37 227.21 497.60 230.93 497.60C234.65 497.60 234.65 522.37 238.38 522.37C242.10 522.37 242.10 497.60 245.82 497.60C249.55 497.60 249.55 497.60 253.27 497.60C256.99 497.60 256.99 472.83 260.72 472.83C264.44 472.83 264.44 522.37 268.16 522.37C271.89 522.37 271.89 516.18 275.61 497.60C279.33 479.03 279.33 448.07 283.06 448.07C286.78 448.07 286.78 522.37 290.50 522.37C294.23 522.37 294.23 472.83 297.95 472.83C301.67 472.83 301.67 485.22 305.39 497.60C309.12 509.98 309.12 522.37 312.84 522.37C316.56 522.37 316.56 497.60 320.29 497.60C324.01 497.60 324.01 497.60 327.73 497.60C331.46 497.60 331.46 472.83 335.18 472.83C338.90 472.83 338.90 522.37 342.63 522.37C346.35 522.37 346.35 522.37 350.07 522.37C353.80 522.37 353.80 522.37 357.52 522.37C361.24 522.37 361.24 472.83 364.97 472.83C368.69 472.83 368.69 472.83 372.41 472.83C376.13 472.83 376.13 497.60 379.86 497.60C383.58 497.60 383.58 497.60 387.30 497.60C391.03 497.60 391.03 497.60 394.75 497.60C398.47 497.60 398.47 448.07 402.20 448.07C405.92 448.07 405.92 454.26 409.64 472.83C413.37 491.41 413.37 522.37 417.09 522.37C420.81 522.37 420.81 522.37 424.54 522.37C428.26 522.37 428.26 522.37 431.98 522.37C435.71 522.37 435.71 472.83 439.43 472.83C443.15 472.83 443.15 472.83 446.88 472.83C450.60 472.83 450.60 472.83 454.32 472.83C458.04 472.83 458.04 522.37 461.77 522.37C465.49 522.37 465.49 522.37 469.21 522.37C472.94 522.37 472.94 497.60 476.66 497.60C480.38 497.60 480.38 497.60 484.11 497.60C487.83 497.60 487.83 522.37 491.55 522.37C495.28 522.37 495.28 497.60 499.00 472.83" fill="none" stroke="#4b5468" stroke-width="1.2" stroke-linejoin="round"/>
<g fill="#4b5468"><circle cx="89.45" cy="497.60" r="1.75"/><circle cx="96.90" cy="497.60" r="1.75"/><circle cx="104.34" cy="472.83" r="1.75"/><circle cx="111.79" cy="472.83" r="1.75"/><circle cx="119.24" cy="522.37" r="1.75"/><circle cx="126.68" cy="497.60" r="1.75"/><circle cx="134.13" cy="472.83" r="1.75"/><circle cx="141.57" cy="497.60" r="1.75"/><circle cx="149.02" cy="472.83" r="1.75"/><circle cx="156.47" cy="472.83" r="1.75"/><circle cx="163.91" cy="497.60" r="1.75"/><circle cx="171.36" cy="448.07" r="1.75"/><circle cx="178.81" cy="497.60" r="1.75"/><circle cx="186.25" cy="472.83" r="1.75"/><circle cx="193.70" cy="497.60" r="1.75"/><circle cx="201.15" cy="472.83" r="1.75"/><circle cx="208.59" cy="522.37" r="1.75"/><circle cx="216.04" cy="472.83" r="1.75"/><circle cx="223.48" cy="522.37" r="1.75"/><circle cx="230.93" cy="497.60" r="1.75"/><circle cx="238.38" cy="522.37" r="1.75"/><circle cx="245.82" cy="497.60" r="1.75"/><circle cx="253.27" cy="497.60" r="1.75"/><circle cx="260.72" cy="472.83" r="1.75"/><circle cx="268.16" cy="522.37" r="1.75"/><circle cx="275.61" cy="497.60" r="1.75"/><circle cx="283.06" cy="448.07" r="1.75"/><circle cx="290.50" cy="522.37" r="1.75"/><circle cx="297.95" cy="472.83" r="1.75"/><circle cx="305.39" cy="497.60" r="1.75"/><circle cx="312.84" cy="522.37" r="1.75"/><circle cx="320.29" cy="497.60" r="1.75"/><circle cx="327.73" cy="497.60" r="1.75"/><circle cx="335.18" cy="472.83" r="1.75"/><circle cx="342.63" cy="522.37" r="1.75"/><circle cx="350.07" cy="522.37" r="1.75"/><circle cx="357.52" cy="522.37" r="1.75"/><circle cx="364.97" cy="472.83" r="1.75"/><circle cx="372.41" cy="472.83" r="1.75"/><circle cx="379.86" cy="497.60" r="1.75"/><circle cx="387.30" cy="497.60" r="1.75"/><circle cx="394.75" cy="497.60" r="1.75"/><circle cx="402.20" cy="448.07" r="1.75"/><circle cx="409.64" cy="472.83" r="1.75"/><circle cx="417.09" cy="522.37" r="1.75"/><circle cx="424.54" cy="522.37" r="1.75"/><circle cx="431.98" cy="522.37" r="1.75"/><circle cx="439.43" cy="472.83" r="1.75"/><circle cx="446.88" cy="472.83" r="1.75"/><circle cx="454.32" cy="472.83" r="1.75"/><circle cx="461.77" cy="522.37" r="1.75"/><circle cx="469.21" cy="522.37" r="1.75"/><circle cx="476.66" cy="497.60" r="1.75"/><circle cx="484.11" cy="497.60" r="1.75"/><circle cx="491.55" cy="522.37" r="1.75"/><circle cx="499.00" cy="472.83" r="1.75"/></g>
<path d="M89.45 571.90H499.00" fill="none" stroke="#03b2fd" stroke-width="1.2" stroke-linejoin="round"/>
<g fill="#03b2fd"><circle cx="89.45" cy="571.90" r="1.75"/><circle cx="96.90" cy="571.90" r="1.75"/><circle cx="104.34" cy="571.90" r="1.75"/><circle cx="111.79" cy="571.90" r="1.75"/><circle cx="119.24" cy="571.90" r="1.75"/><circle cx="126.68" cy="571.90" r="1.75"/><circle cx="134.13" cy="571.90" r="1.75"/><circle cx="141.57" cy="571.90" r="1.75"/><circle cx="149.02" cy="571.90" r="1.75"/><circle cx="156.47" cy="571.90" r="1.75"/><circle cx="163.91" cy="571.90" r="1.75"/><circle cx="171.36" cy="571.90" r="1.75"/><circle cx="178.81" cy="571.90" r="1.75"/><circle cx="186.25" cy="571.90" r="1.75"/><circle cx="193.70" cy="571.90" r="1.75"/><circle cx="201.15" cy="571.90" r="1.75"/><circle cx="208.59" cy="571.90" r="1.75"/><circle cx="216.04" cy="571.90" r="1.75"/><circle cx="223.48" cy="571.90" r="1.75"/><circle cx="230.93" cy="571.90" r="1.75"/><circle cx="238.38" cy="571.90" r="1.75"/><circle cx="245.82" cy="571.90" r="1.75"/><circle cx="253.27" cy="571.90" r="1.75"/><circle cx="260.72" cy="571.90" r="1.75"/><circle cx="268.16" cy="571.90" r="1.75"/><circle cx="275.61" cy="571.90" r="1.75"/><circle cx="283.06" cy="571.90" r="1.75"/><circle cx="290.50" cy="571.90" r="1.75"/><circle cx="297.95" cy="571.90" r="1.75"/><circle cx="305.39" cy="571.90" r="1.75"/><circle cx="312.84" cy="571.90" r="1.75"/><circle cx="320.29" cy="571.90" r="1.75"/><circle cx="327.73" cy="571.90" r="1.75"/><circle cx="335.18" cy="571.90" r="1.75"/><circle cx="342.63" cy="571.90" r="1.75"/><circle cx="350.07" cy="571.90" r="1.75"/><circle cx="357.52" cy="571.90" r="1.75"/><circle cx="364.97" cy="571.90" r="1.75"/><circle cx="372.41" cy="571.90" r="1.75"/><circle cx="379.86" cy="571.90" r="1.75"/><circle cx="387.30" cy="571.90" r="1.75"/><circle cx="394.75" cy="571.90" r="1.75"/><circle cx="402.20" cy="571.90" r="1.75"/><circle cx="409.64" cy="571.90" r="1.75"/><circle cx="417.09" cy="571.90" r="1.75"/><circle cx="424.54" cy="571.90" r="1.75"/><circle cx="431.98" cy="571.90" r="1.75"/><circle cx="439.43" cy="571.90" r="1.75"/><circle cx="446.88" cy="571.90" r="1.75"/><circle cx="454.32" cy="571.90" r="1.75"/><circle cx="461.77" cy="571.90" r="1.75"/><circle cx="469.21" cy="571.90" r="1.75"/><circle cx="476.66" cy="571.90" r="1.75"/><circle cx="484.11" cy="571.90" r="1.75"/><circle cx="491.55" cy="571.90" r="1.75"/><circle cx="499.00" cy="571.90" r="1.75"/></g>
<path fill="#ffbc00" d="M639.70 427.80A76.00 76.00 0 1 1 563.70 503.80L586.50 503.80A53.20 53.20 0 1 0 639.70 450.60Z"/><path fill="#fff1cc" d="M563.70 503.80A76.00 76.00 0 0 1 639.70 427.80L639.70 450.60A53.20 53.20 0 0 0 586.50 503.80Z"/>
<circle cx="551.150" cy="403.900" r="4.750" fill="none" stroke="#1aaff5" stroke-width="1.150"/><circle cx="551.150" cy="403.900" r="2.750" fill="#1aaff5"/><circle cx="630" cy="403.900" r="4.750" fill="none" stroke="#555" stroke-width="1.150"/>
</svg>
</div>
</body>
</html>
